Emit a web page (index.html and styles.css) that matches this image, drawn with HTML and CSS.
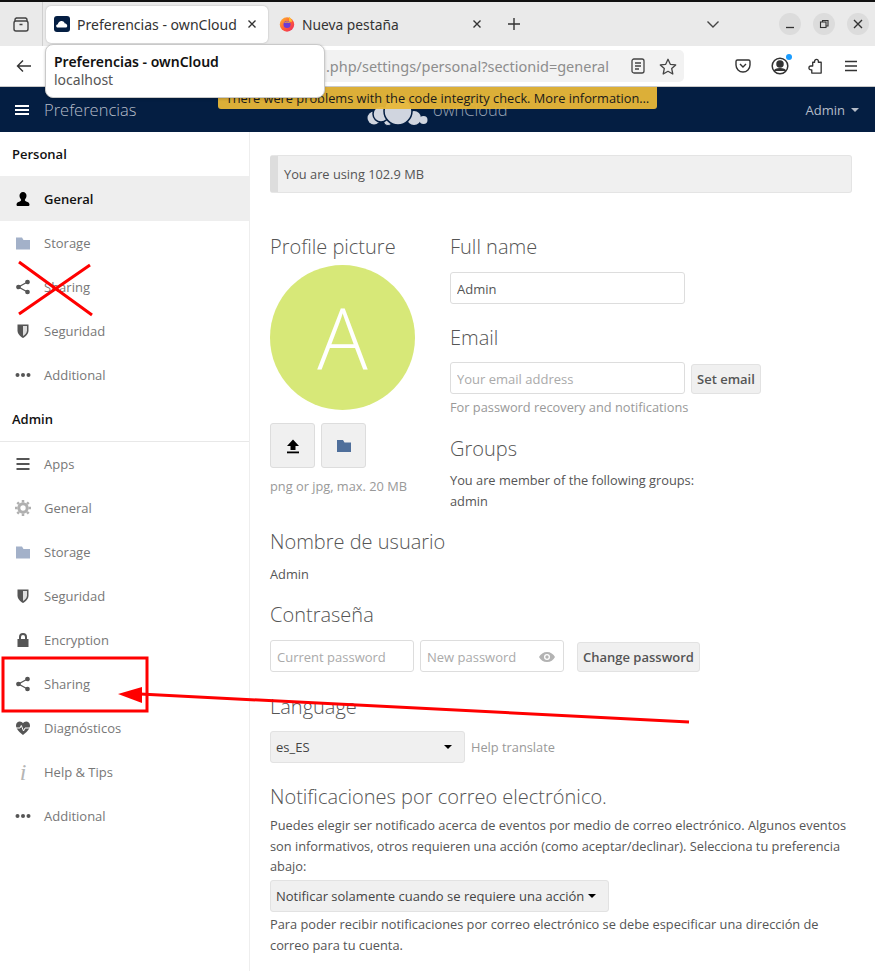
FILE: index.html
```html
<!DOCTYPE html>
<html lang="es">
<head>
<meta charset="utf-8">
<title>Preferencias - ownCloud</title>
<link rel="stylesheet" href="styles.css">
</head>
<body>
<div class="topstrip"></div>
<div class="tabbar">
  <div class="tabview">
    <svg width="18" height="18" viewBox="0 0 18 18" fill="none" stroke="#444" stroke-width="1.4"><rect x="2" y="6" width="14" height="10" rx="2"/><path d="M4 3h10M3 6V5a2 2 0 0 1 2-2M15 6V5a2 2 0 0 0-2-2M7.5 9.5h3"/></svg>
  </div>
  <div class="tab active">
    <svg class="favicon" width="16" height="16" viewBox="0 0 16 16"><rect width="16" height="16" rx="3" fill="#041e42"/><path d="M3 11.5c-1.500-1-1-3 .8-3.200C4.200 6 6.500 4.500 8.500 5.200c1.200.3 2 1.200 2.300 2.200 2-.2 3.500 2.800 1.500 4.100z" fill="#fff"/></svg>
    <span class="tabtitle">Preferencias - ownCloud</span>
    <span class="tabclose"><svg width="10" height="10" viewBox="0 0 10 10" stroke="#333" stroke-width="1.4"><path d="M1.500 1.500l7 7M8.500 1.500l-7 7"/></svg></span>
  </div>
  <div class="tab">
    <svg class="favicon" width="16" height="16" viewBox="0 0 16 16"><defs><linearGradient id="fx" x1="0" y1="0" x2="1" y2="1"><stop offset="0" stop-color="#ffbd2e"/><stop offset=".55" stop-color="#ff5a36"/><stop offset="1" stop-color="#e8246d"/></linearGradient></defs><circle cx="8" cy="8.500" r="7.200" fill="url(#fx)"/><path d="M10 0.800c2 2 3 3 3 5l-3 0z" fill="#ffbd2e"/><circle cx="8" cy="8.500" r="3.500" fill="#6b3bd6"/><path d="M5 7c2-2 5-2 6 0-2-.7-4-.7-6 0z" fill="#ffb02e"/></svg>
    <span class="tabtitle">Nueva pestaña</span>
    <span class="tabclose"><svg width="10" height="10" viewBox="0 0 10 10" stroke="#333" stroke-width="1.4"><path d="M1.500 1.500l7 7M8.500 1.500l-7 7"/></svg></span>
  </div>
  <div class="newtab"><svg width="14" height="14" viewBox="0 0 14 14" stroke="#333" stroke-width="1.4"><path d="M7 1v12M1 7h12"/></svg></div>
  <div class="tabspacer"></div>
  <div class="tablist"><svg width="14" height="9" viewBox="0 0 14 9" fill="none" stroke="#444" stroke-width="1.4"><path d="M1.500 1.500L7 7l5.500-5.500"/></svg></div>
  <div class="winbtns">
    <span class="winbtn"><svg width="10" height="10" viewBox="0 0 10 10" stroke="#333" stroke-width="1.300"><path d="M1 8.500h8"/></svg></span>
    <span class="winbtn"><svg width="10" height="10" viewBox="0 0 10 10" fill="none" stroke="#333" stroke-width="1.100"><rect x="1.500" y="3" width="5.500" height="5.500"/><path d="M3.500 3V1.500H9V7H7"/></svg></span>
    <span class="winbtn"><svg width="10" height="10" viewBox="0 0 10 10" stroke="#333" stroke-width="1.400"><path d="M1 1l8 8M9 1l-8 8"/></svg></span>
  </div>
</div>
<div class="toolbar">
  <span class="backbtn"><svg width="16" height="14" viewBox="0 0 16 14" fill="none" stroke="#333" stroke-width="1.400"><path d="M15 7H1.500M7 1.500L1.500 7 7 12.500"/></svg></span>
  <div class="urlbar">
    <span class="urltext">.php/settings/personal?sectionid=general</span>
    <svg class="urlicon" width="14" height="16" viewBox="0 0 14 16" fill="none" stroke="#444" stroke-width="1.300"><rect x="1" y="1" width="12" height="14" rx="2"/><path d="M4 5h6M4 8h6M4 11h4"/></svg>
    <svg class="urlicon" width="18" height="17" viewBox="0 0 18 17" fill="none" stroke="#444" stroke-width="1.300"><path d="M9 1.300l2.300 5 5.400.6-4 3.700 1.100 5.400L9 13.300 4.200 16l1.100-5.400-4-3.700 5.400-.6z" stroke-linejoin="round"/></svg>
  </div>
  <div class="toolicons">
    <svg width="16" height="14" viewBox="0 0 16 14" fill="none" stroke="#333" stroke-width="1.400"><path d="M1 2.500A1.500 1.500 0 0 1 2.500 1h11A1.500 1.500 0 0 1 15 2.500V6A7 7 0 0 1 1 6z"/><path d="M5 5l3 3 3-3"/></svg>
    <span class="account"><svg width="18" height="18" viewBox="0 0 18 18" fill="none" stroke="#333" stroke-width="1.500"><circle cx="9" cy="9" r="7.800"/><circle cx="9" cy="7" r="3" fill="#333"/><path d="M3.500 14c1-3 10-3 11 0" fill="#333"/></svg><span class="dot"></span></span>
    <svg width="16" height="17" viewBox="0 0 17 17" fill="none" stroke="#333" stroke-width="1.400"><path d="M5 4h2V3a2 2 0 0 1 4 0v1h3v11.500H4V12H3a2 2 0 0 1 0-4h2z" stroke-linejoin="round"/></svg>
    <svg width="14" height="12" viewBox="0 0 14 12" stroke="#333" stroke-width="1.400"><path d="M1 1.500h12M1 6h12M1 10.500h12"/></svg>
  </div>
</div>
<header class="appheader">
  <div class="menu-title">
    <svg width="14" height="10" viewBox="0 0 14 10" fill="#fff"><rect width="14" height="2"/><rect y="4" width="14" height="2"/><rect y="8" width="14" height="2"/></svg>
    <span>Preferencias</span>
  </div>
  <div class="logo">
    <svg width="62" height="45" viewBox="0 0 62 45" fill="#d0d5df"><circle cx="7" cy="31" r="6.500"/><circle cx="56.500" cy="33" r="4"/><circle cx="47" cy="31" r="7"/><circle cx="21" cy="34" r="4.500" stroke="#041e42" stroke-width="1.200"/><circle cx="14" cy="27" r="8" stroke="#041e42" stroke-width="1.500"/><circle cx="31" cy="24" r="14" stroke="#041e42" stroke-width="1.500"/></svg>
    <span class="logotext">ownCloud</span>
  </div>
  <div class="user">Admin <span class="caret"></span></div>
</header>
<div class="app">
  <nav class="sidebar">
    <h3 class="navhead">Personal</h3>
    <ul class="navlist">
      <li class="navitem current"><svg class="ic" viewBox="0 0 16 16" fill="#000"><path d="M8 1a3.500 3.500 0 0 0-3.500 3.800c0 1.700 1 2.900 1.500 3.700.4.800 0 1.500-1.200 1.900C3 11 1.500 11.600 1.500 13.500c0 1 .6 1.500 1.500 1.500h10c.9 0 1.500-.5 1.500-1.500 0-1.900-1.500-2.500-3.300-3.100-1.200-.4-1.600-1.100-1.200-1.900.5-.8 1.500-2 1.500-3.700A3.500 3.500 0 0 0 8 1z"/></svg><span>General</span></li>
      <li class="navitem"><svg class="ic" viewBox="0 0 16 16" fill="#a3b1c9"><path d="M1 2.500h6L8.500 5H15v9.500H1z"/></svg><span>Storage</span></li>
      <li class="navitem"><svg class="ic" viewBox="0 0 16 16" fill="#555" stroke="#555" stroke-width="1.300"><path d="M12.500 3L3.500 8l9 5" fill="none"/><circle cx="12.500" cy="3" r="1.700"/><circle cx="3.500" cy="8" r="1.700"/><circle cx="12.500" cy="13" r="1.700"/></svg><span>Sharing</span></li>
      <li class="navitem"><svg class="ic" viewBox="0 0 16 16"><path d="M2.500 1.500h11v6c0 3.500-3 6-5.500 7.500C5.500 13.500 2.500 11 2.500 7.500z" fill="#555"/><path d="M8 3h4v4.500c0 2.400-2 4.200-4 5.500z" fill="#ddd"/></svg><span>Seguridad</span></li>
      <li class="navitem"><svg class="ic" viewBox="0 0 16 16" fill="#555"><circle cx="2.500" cy="8" r="2"/><circle cx="8" cy="8" r="2"/><circle cx="13.500" cy="8" r="2"/></svg><span>Additional</span></li>
    </ul>
    <h3 class="navhead admin">Admin</h3>
    <ul class="navlist">
      <li class="navitem"><svg class="ic" viewBox="0 0 16 16" fill="#555"><rect x="1.500" y="2" width="13" height="2"/><rect x="1.500" y="7" width="13" height="2"/><rect x="1.500" y="12" width="13" height="2"/></svg><span>Apps</span></li>
      <li class="navitem"><svg class="ic" viewBox="0 0 16 16" fill="none" stroke="#b0b0b0" stroke-width="3"><circle cx="8" cy="8" r="4.200"/><path stroke-width="2.500" d="M8 0v2.500M8 13.500V16M0 8h2.500M13.500 8H16M2.300 2.300l1.800 1.800M11.900 11.900l1.800 1.800M2.300 13.700l1.800-1.800M11.900 4.100l1.800-1.800"/></svg><span>General</span></li>
      <li class="navitem"><svg class="ic" viewBox="0 0 16 16" fill="#a3b1c9"><path d="M1 2.500h6L8.500 5H15v9.500H1z"/></svg><span>Storage</span></li>
      <li class="navitem"><svg class="ic" viewBox="0 0 16 16"><path d="M2.500 1.500h11v6c0 3.500-3 6-5.500 7.500C5.500 13.500 2.500 11 2.500 7.500z" fill="#555"/><path d="M8 3h4v4.500c0 2.400-2 4.200-4 5.500z" fill="#ddd"/></svg><span>Seguridad</span></li>
      <li class="navitem"><svg class="ic" viewBox="0 0 16 16" fill="#555"><path d="M2.500 7H4V5a4 4 0 0 1 8 0v2h1.500v8h-11zM6 7h4V5a2 2 0 0 0-4 0z" fill-rule="evenodd"/></svg><span>Encryption</span></li>
      <li class="navitem"><svg class="ic" viewBox="0 0 16 16" fill="#555" stroke="#555" stroke-width="1.300"><path d="M12.500 3L3.500 8l9 5" fill="none"/><circle cx="12.500" cy="3" r="1.700"/><circle cx="3.500" cy="8" r="1.700"/><circle cx="12.500" cy="13" r="1.700"/></svg><span>Sharing</span></li>
      <li class="navitem"><svg class="ic" viewBox="0 0 16 16"><path d="M8 15C5 12.500 1 9.500 1 5.500 1 3 3 1.500 4.800 1.500 6.200 1.500 7.300 2.300 8 3.300 8.700 2.300 9.800 1.500 11.200 1.500 13 1.500 15 3 15 5.500 15 9.500 11 12.500 8 15z" fill="#555"/><path d="M0 8h5l1.300-2.500L8.500 11l1.500-3h6" fill="none" stroke="#fff" stroke-width="1"/></svg><span>Diagnósticos</span></li>
      <li class="navitem"><span class="ic info">i</span><span>Help &amp; Tips</span></li>
      <li class="navitem"><svg class="ic" viewBox="0 0 16 16" fill="#555"><circle cx="2.500" cy="8" r="2"/><circle cx="8" cy="8" r="2"/><circle cx="13.500" cy="8" r="2"/></svg><span>Additional</span></li>
    </ul>
  </nav>
  <main class="content">
    <div class="quota">You are using 102.9 MB</div>
    <div class="profile">
      <section class="piccol">
        <h2 class="sect">Profile picture</h2>
        <div class="avatar">A</div>
        <div class="picbtns">
          <button class="picbtn"><svg width="16" height="16" viewBox="0 0 16 16" fill="#000"><path d="M8 1.500L14 8h-3.500v4h-5V8H2z"/><rect x="2" y="13.500" width="12" height="1.800"/></svg></button>
          <button class="picbtn"><svg width="16" height="16" viewBox="0 0 16 16" fill="#4f6f9b"><path d="M1 2h6l1.500 2.500H15V14H1z"/></svg></button>
        </div>
        <p class="muted pichint">png or jpg, max. 20 MB</p>
      </section>
      <section class="infocol">
        <h2 class="sect">Full name</h2>
        <input class="field wide name" value="Admin">
        <h2 class="sect email">Email</h2>
        <div class="emailrow">
          <input class="field wide" placeholder="Your email address">
          <button class="btn">Set email</button>
        </div>
        <p class="muted recovery">For password recovery and notifications</p>
        <h2 class="sect groups">Groups</h2>
        <p class="para groupline">You are member of the following groups:<br>admin</p>
      </section>
    </div>
    <h2 class="sect user-h">Nombre de usuario</h2>
    <p class="para uname">Admin</p>
    <h2 class="sect pass-h">Contraseña</h2>
    <div class="passrow">
      <input class="field pass" placeholder="Current password">
      <span class="newpass"><input class="field pass" placeholder="New password"><svg class="eye" width="16" height="10" viewBox="0 0 16 10" fill="#b3b3b3"><path d="M8 0C4.500 0 1.500 2 0 5c1.500 3 4.500 5 8 5s6.500-2 8-5c-1.500-3-4.500-5-8-5zm0 8a3 3 0 1 1 0-6 3 3 0 0 1 0 6zm0-4.700a1.700 1.700 0 1 0 0 3.400 1.700 1.700 0 0 0 0-3.400z" fill-rule="evenodd"/></svg></span>
      <button class="btn change">Change password</button>
    </div>
    <h2 class="sect lang-h">Language</h2>
    <div class="langrow">
      <div class="select lang">es_ES<span class="caret dark"></span></div>
      <span class="muted helptr">Help translate</span>
    </div>
    <h2 class="sect notif-h">Notificaciones por correo electrónico.</h2>
    <p class="para notif">Puedes elegir ser notificado acerca de eventos por medio de correo electrónico. Algunos eventos son informativos, otros requieren una acción (como aceptar/declinar). Selecciona tu preferencia abajo:</p>
    <div class="select notifsel">Notificar solamente cuando se requiere una acción<span class="caret dark"></span></div>
    <p class="para notif after">Para poder recibir notificaciones por correo electrónico se debe especificar una dirección de correo para tu cuenta.</p>
  </main>
</div>
<div class="tooltip"><strong>Preferencias - ownCloud</strong><span>localhost</span></div>
<div class="warning">There were problems with the code integrity check. More information…</div>
<svg class="annot" width="875" height="971" viewBox="0 0 875 971" fill="none" stroke="#f00">
  <path d="M19 262L92 315M90 265L19 314" stroke-width="3"/>
  <rect x="3" y="658" width="144" height="53" stroke-width="3"/>
  <path d="M689 722L140 694" stroke-width="3"/>
  <path d="M118 694L142 687L142 703z" fill="#f00" stroke="none"/>
</svg>
</body>
</html>
```
FILE: styles.css
```css
* { box-sizing: border-box; }
html, body { margin: 0; padding: 0; }
body { width: 875px; height: 971px; overflow: hidden; position: relative; background: #fff; font-family: "Open Sans", sans-serif; font-size: 13px; color: #555; }
h2, h3, p, ul { margin: 0; padding: 0; }
ul { list-style: none; }

.topstrip { height: 2px; background: #111; }
.tabbar { height: 44px; background: #eaeaea; display: flex; align-items: center; font-family: "Noto Sans", sans-serif; font-size: 13.800px; color: #333; }
.tabview { width: 43px; height: 44px; display: flex; align-items: center; justify-content: center; border-right: 1px solid #cfcfcf; }
.tab { height: 37px; display: flex; align-items: center; padding: 0 8px; gap: 7px; width: 222px; margin-left: 3px; border-radius: 5px; }
.tab.active { background: #fff; box-shadow: 0 0 2px rgba(0,0,0,.25); font-size: 14.050px; }
.tabtitle { flex: 1; white-space: nowrap; overflow: hidden; }
.tabclose { display: flex; width: 16px; justify-content: center; }
.newtab { margin-left: 14px; display: flex; }
.tabspacer { flex: 1; }
.tablist { display: flex; margin-right: 59px; }
.winbtns { display: flex; gap: 12px; margin-right: 6px; }
.winbtn { width: 22px; height: 22px; border-radius: 50%; background: #dcdcdc; display: flex; align-items: center; justify-content: center; }

.toolbar { height: 41px; background: #fff; border-bottom: 1px solid #c9c9c9; display: flex; align-items: center; font-family: "Noto Sans", sans-serif; font-size: 14.500px; }
.backbtn { width: 48px; display: flex; justify-content: center; }
.urlbar { width: 636px; height: 32px; background: #f2f2f2; border-radius: 5px; display: flex; align-items: center; justify-content: flex-end; padding-right: 7px; gap: 14px; }
.urltext { color: #8d8d8d; margin-right: 8px; }
.toolicons { flex: 1; display: flex; align-items: center; justify-content: space-between; padding: 0 17px 0 51px; }
.account { position: relative; display: flex; }
.dot { position: absolute; right: -3px; top: -3px; width: 6px; height: 6px; border-radius: 50%; background: #1a9cff; }

.appheader { height: 45px; background: #041e42; display: flex; align-items: center; justify-content: space-between; padding: 0 16px 0 15px; color: #b5bcc8; position: relative; }
.menu-title { display: flex; align-items: center; gap: 15px; font-size: 16.500px; font-weight: 300; }
.logo { position: absolute; left: 367px; top: 0; display: flex; align-items: flex-start; gap: 4px; color: #9aa4b5; font-size: 16.500px; font-weight: 300; }
.logotext { line-height: 46px; }
.user { display: flex; align-items: center; gap: 6px; }
.caret { display: inline-block; width: 0; height: 0; border: 4px solid transparent; border-top-color: #b5bcc8; border-bottom: 0; }
.caret.dark { border-top-color: #000; border-width: 4px 4px 0; }

.app { display: flex; height: 839px; }
.sidebar { width: 250px; flex: none; border-right: 1px solid #eee; }
.navhead { font-size: 13px; font-weight: 600; color: #111; padding: 0 12px; height: 44px; line-height: 44px; }
.navhead.admin { height: 45px; line-height: 44px; border-bottom: 1px solid #e8e8e8; }
.navitem { height: 44px; display: flex; align-items: center; padding-left: 15px; gap: 13px; color: #777; }
.navitem.current { height: 45px; background: #eee; color: #111; font-weight: 600; }
.ic { width: 16px; height: 16px; flex: none; }
.info { font-family: "Liberation Serif", serif; font-style: italic; font-size: 24px; line-height: 16px; text-align: center; color: #b5b5b5; }

.content { flex: 1; padding: 23px 23px 0 20px; min-width: 0; font-size: 12.800px; }
.quota { height: 38px; background: #f0f0f0; border: 1px solid #e4e4e4; border-left: 8px solid #ddd; border-radius: 3px; padding-left: 6px; line-height: 36px; color: #555; }
.sect { font-size: 20px; font-weight: 300; color: #555; line-height: 27px; }
.profile { display: flex; margin-top: 40px; }
.piccol { width: 180px; flex: none; }
.avatar { width: 145px; height: 145px; margin-top: 5px; border-radius: 50%; background: #d7e878; color: #fff; font-size: 84px; font-weight: 300; line-height: 143px; text-align: center; }
.picbtns { display: flex; gap: 6px; margin-top: 13px; }
.picbtn { width: 45px; height: 45px; background: #f0f0f0; border: 1px solid #ddd; border-radius: 3px; padding: 0; display: flex; align-items: center; justify-content: center; }
.muted { color: #999; }
.pichint { margin-top: 9px; line-height: 18px; }
.field { height: 32px; border: 1px solid #ddd; border-radius: 3px; padding: 1px 6px 0; font: 13px "Open Sans", sans-serif; color: #555; background: #fff; outline: 0; }
.field::placeholder { color: #aaa; opacity: 1; }
.wide { width: 235px; display: block; }
.name { margin-top: 12px; }
.email { margin-top: 20px; }
.emailrow { display: flex; align-items: flex-end; gap: 6px; margin-top: 11px; }
.btn { height: 30px; background: #f0f0f0; border: 1px solid #e2e2e2; border-radius: 3px; font: 600 13px "Open Sans", sans-serif; color: #555; padding: 0 5px; }
.recovery { margin-top: 4px; line-height: 18px; }
.groups { margin-top: 19px; }
.para { line-height: 21px; }
.groupline { margin-top: 8px; }
.user-h { margin-top: 16px; }
.uname { margin-top: 9px; }
.pass-h { margin-top: 16px; }
.passrow { display: flex; align-items: flex-end; margin-top: 12px; }
.pass { width: 144px; }
.newpass { position: relative; margin-left: 6px; display: flex; }
.eye { position: absolute; right: 9px; top: 12px; }
.change { margin-left: 13px; }
.lang-h { margin-top: 21px; }
.langrow { display: flex; align-items: center; gap: 6px; margin-top: 11px; }
.select { background: #f0f0f0; border: 1px solid #e2e2e2; border-radius: 3px; height: 32px; display: flex; align-items: center; justify-content: space-between; padding: 0 12px 0 5px; color: #444; font-size: 13px; }
.lang { width: 195px; }
.notif-h { margin-top: 20px; }
.notif { line-height: 20.500px; margin-top: 5px; }
.notifsel { width: 339px; margin-top: 3px; }
.after { margin-top: 2.500px; }

.tooltip { position: absolute; left: 45px; top: 44px; width: 280px; height: 54px; background: #fff; border: 1px solid #c9c9c9; border-radius: 8px; box-shadow: 0 1px 3px rgba(0,0,0,.2); padding: 8px 8px; display: flex; flex-direction: column; font-family: "Noto Sans", sans-serif; font-size: 14px; line-height: 18px; color: #555; z-index: 3; }
.tooltip strong { color: #111; font-weight: 600; }
.warning { position: absolute; left: 218px; top: 87px; width: 439px; height: 22px; background: rgba(232,183,56,.95); border-radius: 0 0 3px 3px; color: #1a1a1a; font-size: 12.800px; line-height: 22px; text-align: center; z-index: 2; }
.annot { position: absolute; left: 0; top: 0; z-index: 4; pointer-events: none; }
```
